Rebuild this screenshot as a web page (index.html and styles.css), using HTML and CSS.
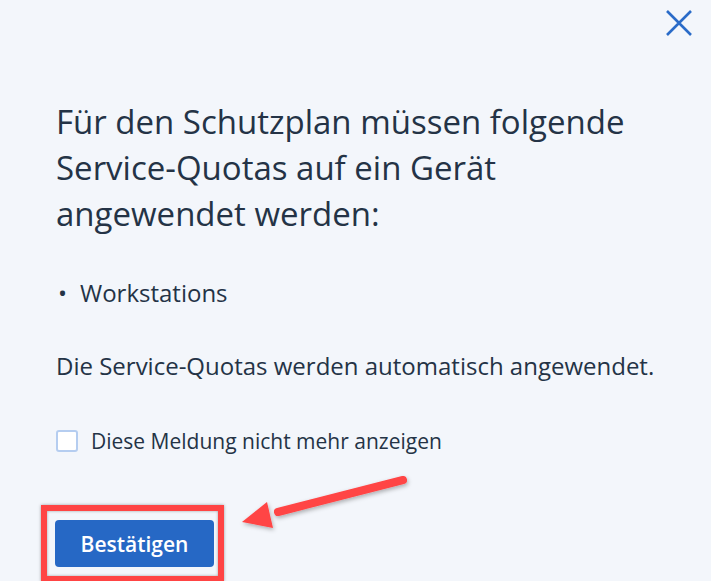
FILE: index.html
```html
<!DOCTYPE html>
<html lang="de">
<head>
    <meta charset="UTF-8">
    <title>Service-Quotas</title>
    <link rel="stylesheet" href="styles.css">
</head>
<body>
    <div class="dialog">
        <button class="close-btn" aria-label="Schließen">
            <svg width="26" height="26" viewBox="0 0 26 26">
                <path d="M1 1 L25 25 M25 1 L1 25" stroke="#2a6bc8" stroke-width="2.6" fill="none"/>
            </svg>
        </button>

        <h1 class="title">Für den Schutzplan müssen folgende Service-Quotas auf ein Gerät angewendet werden:</h1>

        <ul class="quota-list">
            <li>Workstations</li>
        </ul>

        <p class="info">Die Service-Quotas werden automatisch angewendet.</p>

        <label class="check-row">
            <input type="checkbox">
            <span class="check-box"></span>
            <span>Diese Meldung nicht mehr anzeigen</span>
        </label>

        <div class="highlight">
            <button class="confirm-btn">Bestätigen</button>
        </div>

        <svg class="arrow" width="180" height="70" viewBox="0 0 180 70">
            <defs>
                <filter id="shadow" x="-20%" y="-40%" width="140%" height="180%">
                    <feDropShadow dx="1" dy="2" stdDeviation="2" flood-color="#000" flood-opacity="0.3"/>
                </filter>
            </defs>
            <g filter="url(#shadow)">
                <line x1="165" y1="10" x2="40" y2="42" stroke="#ff4444" stroke-width="8" stroke-linecap="round"/>
                <polygon points="4,52 29,32 35,58" fill="#ff4444"/>
            </g>
        </svg>
    </div>
</body>
</html>
```

FILE: styles.css
```css
html, body {
    margin: 0;
    height: 100%;
}
body {
    font-family: 'Open Sans', 'Noto Sans', sans-serif;
    background-color: #f3f6fb;
    color: #243346;
    overflow: hidden;
}
.dialog {
    position: relative;
    padding: 99px 30px 0 56px;
    height: 100%;
    box-sizing: border-box;
}
.close-btn {
    position: absolute;
    top: 10px;
    right: 19px;
    padding: 0;
    border: none;
    background: transparent;
    cursor: pointer;
}
.close-btn svg {
    display: block;
}
.title {
    margin: 0;
    font-size: 33px;
    font-weight: 400;
    line-height: 46px;
}
.quota-list {
    margin: 40px 0 0;
    padding: 0;
    list-style: none;
    font-size: 24px;
    line-height: 32px;
}
.quota-list li::before {
    content: '•';
    display: inline-block;
    width: 24px;
    padding-left: 2px;
    box-sizing: border-box;
}
.info {
    margin: 41px 0 0;
    font-size: 24px;
    line-height: 32px;
}
.check-row {
    display: flex;
    align-items: center;
    gap: 13px;
    margin-top: 48px;
    font-size: 21px;
    line-height: 22px;
    cursor: pointer;
}
.check-row input {
    display: none;
}
.check-box {
    width: 22px;
    height: 22px;
    box-sizing: border-box;
    border: 2px solid #b5cdf0;
    border-radius: 3px;
    background-color: #fff;
}
.highlight {
    display: inline-block;
    margin: 53px 0 0 -15px;
    padding: 9px 4px 9px 8px;
    border: 6px solid #ff4444;
    box-shadow: 0 0 3px rgba(0, 0, 0, 0.35), inset 0 0 3px rgba(0, 0, 0, 0.35);
}
.confirm-btn {
    display: block;
    width: 159px;
    height: 47px;
    border: none;
    border-radius: 4px;
    background-color: #2668c5;
    color: #fff;
    font-family: inherit;
    font-size: 21px;
    font-weight: 600;
    cursor: pointer;
}
.arrow {
    position: absolute;
    left: 238px;
    top: 470px;
}
```
